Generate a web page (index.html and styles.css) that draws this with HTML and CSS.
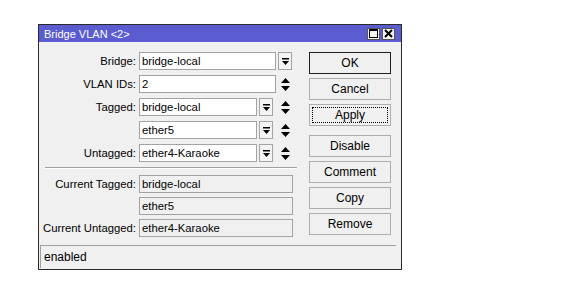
FILE: index.html
```html
<!DOCTYPE html>
<html lang="en">
<head>
    <meta charset="UTF-8">
    <title>Bridge VLAN &lt;2&gt;</title>
    <link rel="stylesheet" href="styles.css">
</head>
<body>
<div class="window">
    <div class="titlebar">
        <span class="title">Bridge VLAN &lt;2&gt;</span>
        <div class="winBtns">
            <span class="winBtn"><svg width="9" height="9" viewBox="0 0 9 9"><rect x="0.5" y="0.5" width="8" height="8" fill="none" stroke="#000"/><rect x="0" y="0" width="9" height="2" fill="#000"/></svg></span>
            <span class="winBtn"><svg width="9" height="9" viewBox="0 0 9 9"><path d="M1 1 L8 8 M8 1 L1 8" stroke="#000" stroke-width="2"/></svg></span>
        </div>
    </div>
    <div class="content">
        <div class="form">
            <div class="row">
                <label>Bridge:</label>
                <div class="fields">
                    <span class="input wide">bridge-local</span>
                    <span class="drop"><svg width="7" height="7" viewBox="0 0 7 7"><rect x="0" y="0" width="7" height="1.5" fill="#000"/><path d="M0 3 H7 L3.5 7 Z" fill="#000"/></svg></span>
                </div>
            </div>
            <div class="row">
                <label>VLAN IDs:</label>
                <div class="fields">
                    <span class="input wide">2</span>
                    <span class="spin spinWide"><svg width="9" height="13" viewBox="0 0 9 13"><path d="M4.5 0 L9 5 H0 Z M0 8 H9 L4.5 13 Z" fill="#000"/></svg></span>
                </div>
            </div>
            <div class="row">
                <label>Tagged:</label>
                <div class="fields">
                    <span class="input short">bridge-local</span>
                    <span class="drop"><svg width="7" height="7" viewBox="0 0 7 7"><rect x="0" y="0" width="7" height="1.5" fill="#000"/><path d="M0 3 H7 L3.5 7 Z" fill="#000"/></svg></span>
                    <span class="spin"><svg width="9" height="13" viewBox="0 0 9 13"><path d="M4.5 0 L9 5 H0 Z M0 8 H9 L4.5 13 Z" fill="#000"/></svg></span>
                </div>
            </div>
            <div class="row">
                <label></label>
                <div class="fields">
                    <span class="input short">ether5</span>
                    <span class="drop"><svg width="7" height="7" viewBox="0 0 7 7"><rect x="0" y="0" width="7" height="1.5" fill="#000"/><path d="M0 3 H7 L3.5 7 Z" fill="#000"/></svg></span>
                    <span class="spin"><svg width="9" height="13" viewBox="0 0 9 13"><path d="M4.5 0 L9 5 H0 Z M0 8 H9 L4.5 13 Z" fill="#000"/></svg></span>
                </div>
            </div>
            <div class="row">
                <label>Untagged:</label>
                <div class="fields">
                    <span class="input short">ether4-Karaoke</span>
                    <span class="drop"><svg width="7" height="7" viewBox="0 0 7 7"><rect x="0" y="0" width="7" height="1.5" fill="#000"/><path d="M0 3 H7 L3.5 7 Z" fill="#000"/></svg></span>
                    <span class="spin"><svg width="9" height="13" viewBox="0 0 9 13"><path d="M4.5 0 L9 5 H0 Z M0 8 H9 L4.5 13 Z" fill="#000"/></svg></span>
                </div>
            </div>

            <div class="separator"></div>

            <div class="row current">
                <label>Current Tagged:</label>
                <div class="fields"><span class="input readonly">bridge-local</span></div>
            </div>
            <div class="row current">
                <label></label>
                <div class="fields"><span class="input readonly">ether5</span></div>
            </div>
            <div class="row current">
                <label>Current Untagged:</label>
                <div class="fields"><span class="input readonly">ether4-Karaoke</span></div>
            </div>
        </div>
        <div class="buttons">
            <button class="btn default">OK</button>
            <button class="btn">Cancel</button>
            <button class="btn focused"><span>Apply</span></button>
            <button class="btn spaced">Disable</button>
            <button class="btn">Comment</button>
            <button class="btn">Copy</button>
            <button class="btn">Remove</button>
        </div>
    </div>
    <div class="status">enabled</div>
</div>
</body>
</html>
```

FILE: styles.css
```css
* {
    margin: 0;
    padding: 0;
    box-sizing: border-box;
}

body {
    background: #fff;
    font: 11.3px "Liberation Sans", Arial, sans-serif;
    color: #000;
}

.window {
    width: 364px;
    height: 246px;
    margin: 24px 0 0 38px;
    border: 1px solid #2a2a2a;
    background: #f0f0f0;
    display: flex;
    flex-direction: column;
}

.titlebar {
    height: 17px;
    background: #5a5cd0;
    color: #fff;
    display: flex;
    align-items: center;
    justify-content: space-between;
    padding: 0 6px 0 5px;
}

.title {
    font-size: 11px;
}

.winBtns {
    display: flex;
    gap: 2px;
}

.winBtn {
    width: 13px;
    height: 12px;
    background: #f4f4f4;
    border: 1px solid #555;
    display: flex;
    align-items: center;
    justify-content: center;
}

.content {
    display: flex;
    padding-top: 10px;
}

.form {
    width: 259px;
}

.row {
    display: grid;
    grid-template-columns: 97px 1fr;
    column-gap: 3px;
    height: 18px;
    margin-bottom: 5px;
    align-items: center;
}

.row label {
    text-align: right;
    white-space: nowrap;
}

.fields {
    display: flex;
    align-items: center;
    height: 18px;
}

.input {
    height: 18px;
    line-height: 16px;
    padding-left: 2px;
    background: #fff;
    border: 1px solid #a3a3a3;
    white-space: nowrap;
}

.input.wide {
    width: 137px;
}

.input.short {
    width: 118px;
}

.input.readonly {
    width: 154px;
    background: #f0f0f0;
}

.drop {
    width: 14px;
    height: 18px;
    margin-left: 2px;
    border: 1px solid #a3a3a3;
    background: #f4f4f4;
    display: flex;
    align-items: center;
    justify-content: center;
}

.spin {
    display: flex;
    margin-left: 8px;
}

.spinWide {
    margin-left: 5px;
}

.separator {
    height: 2px;
    margin: 2px 1px 6px 6px;
    border-top: 1px solid #a0a0a0;
    border-bottom: 1px solid #fff;
}

.row.current {
    margin-bottom: 4px;
}

.buttons {
    margin-left: 11px;
    display: flex;
    flex-direction: column;
    gap: 4px;
}

.btn {
    width: 82px;
    height: 22px;
    font: 12px "Liberation Sans", Arial, sans-serif;
    background: #f0f0f0;
    border: 1px solid #adadad;
    color: #000;
}

.btn.default {
    border: 1px solid #1e1e1e;
}

.btn.focused span {
    display: block;
    margin: 0 2px;
    height: 16px;
    line-height: 14px;
    border: 1px dotted #000;
}

.btn.spaced {
    margin-top: 5px;
}

.status {
    margin: auto 5px 1px 1px;
    height: 23px;
    line-height: 22px;
    padding-left: 3px;
    border-top: 1px solid #a0a0a0;
    border-left: 1px solid #a0a0a0;
    font-size: 12px;
}
```
